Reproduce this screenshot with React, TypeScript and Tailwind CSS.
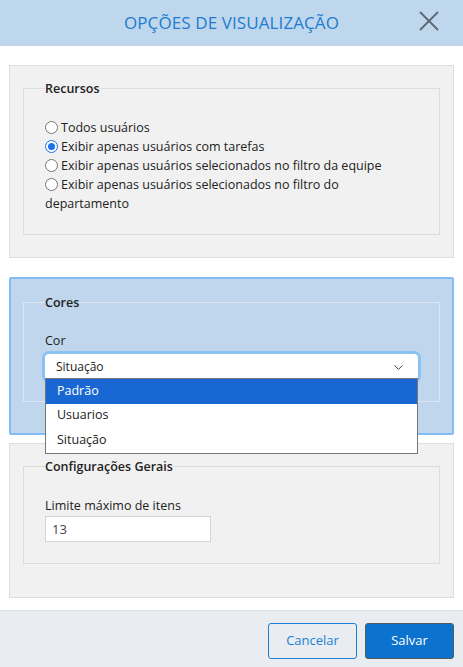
import { X, ChevronDown } from "lucide-react";

const font = { fontFamily: '"Open Sans", "Liberation Sans", sans-serif' };

const Radio = ({ checked }: { checked?: boolean }) => (
    <span
        className={`inline-block align-[-2px] mr-[3px] w-[13px] h-[13px] rounded-full border ${
            checked ? "border-[#1a73e8] bg-white" : "border-[#767676] bg-white"
        } relative`}
    >
        {checked && <span className="absolute left-[2px] top-[2px] w-[7px] h-[7px] rounded-full bg-[#1a73e8]" />}
    </span>
);

export default function App() {
    const options = ["Padrão", "Usuarios", "Situação"];

    return (
        <div className="w-[463px] h-[667px] flex flex-col bg-white text-[#222] text-[12.5px]" style={font}>
            {/* header */}
            <div className="h-[46px] bg-[#bfd7ec] flex items-center justify-center relative shrink-0">
                <h1 className="text-[17px] text-[#1d7bd1] tracking-[0.1px]">OPÇÕES DE VISUALIZAÇÃO</h1>
                <button className="absolute right-[17px] top-[4px] text-[#5f6670]">
                    <X size={34} strokeWidth={1.3} />
                </button>
            </div>

            {/* body */}
            <div className="flex-1 flex flex-col px-[9px] pt-[19px]">
                <div className="h-[193px] border border-[#dddddd] bg-[#f1f1f1] px-[13px] pt-[14px]">
                    <fieldset className="border border-[#dcdcdc] pl-[21px] pr-[40px] pt-[21px] pb-[20px] h-[155px]">
                        <legend className="font-semibold text-[12.5px] leading-[17px]">Recursos</legend>
                        <div className="leading-[19px]">
                            <div><Radio />Todos usuários</div>
                            <div><Radio checked />Exibir apenas usuários com tarefas</div>
                            <div className="-mr-[30px]"><Radio />Exibir apenas usuários selecionados no filtro da equipe</div>
                            <div><Radio />Exibir apenas usuários selecionados no filtro do departamento</div>
                        </div>
                    </fieldset>
                </div>

                <div className="mt-[19px] h-[158px] border-2 border-[#7fbdf4] rounded-[2px] bg-[#bfd6ec] px-[12px] pt-[15px] relative">
                    <fieldset className="border border-[#dce7f2] pl-[21px] pr-[21px] pt-[21px] pb-[22px] h-[108px]">
                        <legend className="font-semibold text-[12.5px] leading-[17px]">Cores</legend>
                        <div className="leading-[18px]">Cor</div>
                        <div className="mt-[4px] h-[26px] rounded-[4px] bg-white ring-[3px] ring-[#8cc2f3] flex items-center justify-between pl-[11px] pr-[12px] text-[12px]">
                            <span>Situação</span>
                            <ChevronDown size={15} strokeWidth={1.6} className="text-[#444]" />
                        </div>
                    </fieldset>
                    <div className="absolute left-[34px] top-[99px] w-[373px] border border-[#767676] bg-white text-[12.5px] z-10">
                        {options.map((o, i) => (
                            <div
                                key={o}
                                className={`h-[24.5px] flex items-center pl-[11px] ${i === 0 ? "bg-[#1967d2] text-white" : ""}`}
                            >
                                {o}
                            </div>
                        ))}
                    </div>
                </div>

                <div className="mt-[8px] h-[155px] border border-[#dddddd] bg-[#f1f1f1] px-[13px] pt-[14px]">
                    <fieldset className="border border-[#dcdcdc] pl-[21px] pr-4 pt-[22px] pb-[20px] h-[106px]">
                        <legend className="font-semibold text-[12.5px] leading-[17px]">Configurações Gerais</legend>
                        <div className="leading-[18px]">Limite máximo de itens</div>
                        <input
                            readOnly
                            value="13"
                            className="mt-[1px] w-[166px] h-[26px] border border-[#d4d4d4] bg-white px-[6px] text-[13px] text-[#444] outline-none"
                            style={font}
                        />
                    </fieldset>
                </div>
            </div>

            {/* footer */}
            <div className="h-[57px] shrink-0 bg-[#e9edf1] border-t border-[#dde2e8] flex items-start justify-end gap-[8px] pt-[12px] pr-[9px]">
                <button className="w-[89px] h-[36px] rounded-[3px] border border-[#1a7fd4] text-[#1a7fd4] text-[13px]">
                    Cancelar
                </button>
                <button className="w-[89px] h-[36px] rounded-[3px] border border-[#595959] bg-[#0b73ce] text-white text-[13px]">
                    Salvar
                </button>
            </div>
        </div>
    );
}
